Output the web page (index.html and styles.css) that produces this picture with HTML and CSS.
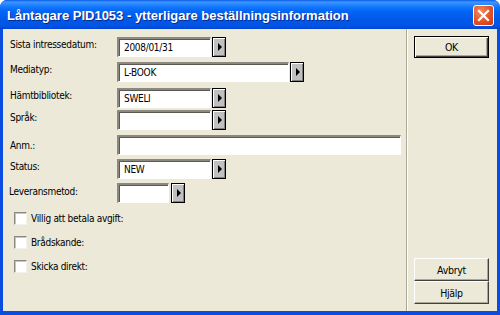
FILE: index.html
```html
<!DOCTYPE html>
<html lang="sv">
<head>
  <meta charset="UTF-8">
  <title>Låntagare PID1053</title>
  <link rel="stylesheet" href="styles.css">
</head>
<body>
  <div class="window">
    <div class="titlebar">
      <span class="title">Låntagare PID1053 - ytterligare beställningsinformation</span>
      <div class="close">
        <svg width="13" height="13" viewBox="0 0 13 13">
          <path d="M2 2 L11 11 M11 2 L2 11" stroke="#fff" stroke-width="2.2" stroke-linecap="square"/>
        </svg>
      </div>
    </div>
    <div class="client">
      <div class="form">
        <div class="row">
          <span class="label">Sista intressedatum:</span>
          <div class="field">2008/01/31</div>
          <div class="arrow"></div>
        </div>
        <div class="row">
          <span class="label">Mediatyp:</span>
          <div class="field wide">L-BOOK</div>
          <div class="arrow"></div>
        </div>
        <div class="row gap-l">
          <span class="label">Hämtbibliotek:</span>
          <div class="field">SWELI</div>
          <div class="arrow"></div>
        </div>
        <div class="row gap-s">
          <span class="label">Språk:</span>
          <div class="field"></div>
          <div class="arrow"></div>
        </div>
        <div class="row">
          <span class="label low">Anm.:</span>
          <div class="field full"></div>
        </div>
        <div class="row gap-m">
          <span class="label">Status:</span>
          <div class="field">NEW</div>
          <div class="arrow"></div>
        </div>
        <div class="row gap-m">
          <span class="label shift">Leveransmetod:</span>
          <div class="field small"></div>
          <div class="arrow apart"></div>
        </div>

        <div class="checks">
          <label class="check"><span class="box"></span>Villig att betala avgift:</label>
          <label class="check"><span class="box"></span>Brådskande:</label>
          <label class="check"><span class="box"></span>Skicka direkt:</label>
        </div>
      </div>

      <div class="sidebar">
        <div class="btn default">OK</div>
        <div class="spacer"></div>
        <div class="btn">Avbryt</div>
        <div class="btn">Hjälp</div>
      </div>
    </div>
  </div>
</body>
</html>
```

FILE: styles.css
```css
body {
  margin: 0;
  width: 500px;
  height: 315px;
  overflow: hidden;
  font-family: "DejaVu Sans Condensed", "Liberation Sans", sans-serif;
  font-size: 10px;
  letter-spacing: -0.3px;
  color: #000;
}

.window {
  width: 500px;
  height: 315px;
  display: flex;
  flex-direction: column;
  background: #0a4de0;
  border-radius: 7px 7px 0 0;
  overflow: hidden;
}

.titlebar {
  height: 29px;
  flex: none;
  display: flex;
  align-items: center;
  justify-content: space-between;
  padding: 0 6px 0 7px;
  background: linear-gradient(to bottom,
    #0a5ae8 0px, #3d95ff 2px, #2a8bff 4px, #1277ff 7px,
    #0366f6 11px, #015ded 16px, #0057e7 21px, #0055e6 25px,
    #0050e0 27px, #0043cc 29px);
}

.title {
  font-family: "Liberation Sans", Arial, sans-serif;
  font-weight: bold;
  font-size: 13px;
  letter-spacing: 0;
  color: #fff;
  padding-top: 1px;
  text-shadow: 1px 1px 0 #0a2a8a;
}

.close {
  width: 19px;
  height: 19px;
  margin-top: 1px;
  border: 1px solid #fff;
  border-radius: 3px;
  background: radial-gradient(circle at 35% 30%, #f08a64, #df4f24 60%, #c53a12);
  display: flex;
  align-items: center;
  justify-content: center;
}

.client {
  flex: 1;
  display: flex;
  margin: 0 3px 4px 3px;
  background: #ece9d8;
}

.form {
  width: 404px;
  padding: 8px 0 0 7px;
  box-sizing: border-box;
  border-right: 1px solid #aca899;
}

.row {
  display: flex;
  align-items: flex-start;
  height: 20px;
  margin-top: 5px;
}

.row:first-child {
  margin-top: 0;
}

.row.gap-s {
  margin-top: 2px;
}

.row.gap-m {
  margin-top: 4px;
}

.row.gap-l {
  margin-top: 6px;
}

.label {
  width: 107px;
  flex: none;
  line-height: 13px;
  padding-top: 1px;
}

.label.low {
  padding-top: 4px;
}

.label.shift {
  margin-left: -1px;
  width: 108px;
  padding-top: 2px;
}

.field {
  width: 94px;
  height: 20px;
  box-sizing: border-box;
  padding: 2px 4px 0 5px;
  line-height: 14px;
  background: #fff;
  border-style: solid;
  border-width: 2px 1px 1px 2px;
  border-color: #8c8a80 #ffffff #ffffff #8c8a80;
  box-shadow: inset 1px 1px 0 #5b5a52;
}

.field.wide {
  width: 172px;
}

.field.full {
  width: 284px;
}

.field.small {
  width: 52px;
}

.arrow {
  width: 14px;
  height: 20px;
  box-sizing: border-box;
  margin-left: 1px;
  border: 1px solid #000;
  background: #c0c0c0;
  box-shadow: inset 1px 1px 0 #fff, inset -1px -1px 0 #808080;
  display: flex;
  align-items: center;
  justify-content: center;
}

.arrow.apart {
  margin-left: 2px;
}

.arrow::after {
  content: "";
  width: 0;
  height: 0;
  border-top: 4px solid transparent;
  border-bottom: 4px solid transparent;
  border-left: 4px solid #000;
  margin-left: 1px;
}

.checks {
  display: flex;
  flex-direction: column;
  gap: 11px;
  margin-top: 9px;
  padding-left: 4px;
}

.check {
  display: flex;
  align-items: center;
  height: 13px;
  line-height: 13px;
}

.box {
  width: 13px;
  height: 13px;
  box-sizing: border-box;
  margin-right: 4px;
  background: #fff;
  border-style: solid;
  border-width: 1px;
  border-color: #8c8a80 #f4f3ee #f4f3ee #8c8a80;
  box-shadow: inset 1px 1px 0 #c9c6b8;
}

.sidebar {
  flex: 1;
  display: flex;
  flex-direction: column;
  padding: 7px 6px 7px 6px;
  border-left: 1px solid #fff;
}

.spacer {
  flex: 1;
}

.btn {
  width: 75px;
  height: 23px;
  box-sizing: border-box;
  display: flex;
  align-items: center;
  justify-content: center;
  background: #ece9d8;
  border-style: solid;
  border-width: 1px;
  border-color: #fff #404040 #404040 #fff;
  box-shadow: inset -1px -1px 0 #aca899;
  font-size: 10.5px;
}

.btn.default {
  height: 22px;
  border: 1px solid #000;
  box-shadow: inset 1px 1px 0 #fff, inset -1px -1px 0 #404040, inset -2px -2px 0 #aca899;
}
```
